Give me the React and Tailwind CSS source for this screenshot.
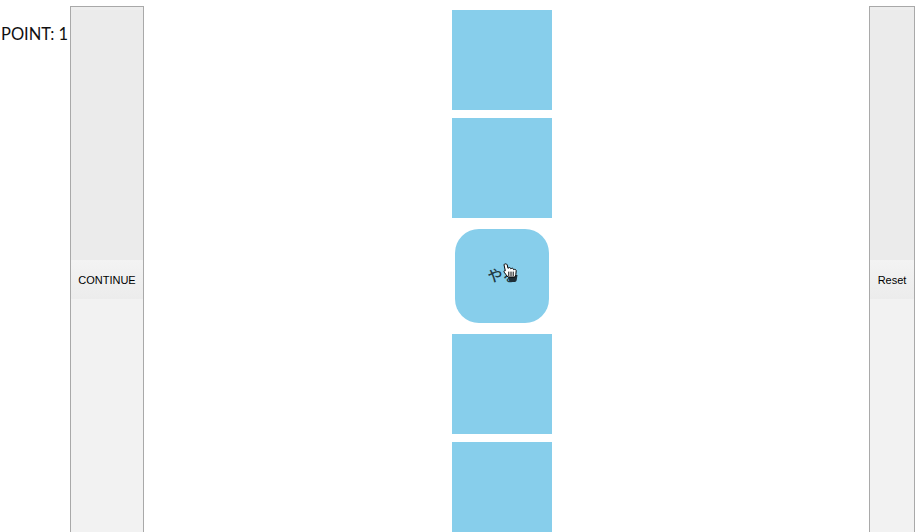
function SideButton({ label, className }) {
  return (
    <button className={`flex h-[532px] shrink-0 flex-col border border-[#a9a9a9] bg-[#f2f2f2] text-[11px] text-black ${className}`}>
      <div className="h-[3px] w-full bg-[#eeeeee]" />
      <div className="h-[250px] w-full bg-[#ebebeb]" />
      <div className="flex h-[39px] w-full items-center justify-center bg-gradient-to-b from-[#f3f3f3] to-[#ececec] pt-[2px]">
        {label}
      </div>
    </button>
  );
}

function HandCursor() {
  return (
    <svg className="absolute left-[48px] top-[34px]" width="16" height="20" viewBox="0 0 16 20">
      {/* dark part sitting under the hand */}
      <path d="M5 12h9.5l-.8 5c-.3 1.4-1.2 2-2.6 2H8.4c-1.4 0-2.2-.7-2.6-2z" fill="#1f2f38" />
      <path
        d="M1 1.8c0-1.2 3-1.2 3.2 0l.8 3.6.7-.6c.6-.5 1.7-.3 1.9.5l.2.6.8-.5c.7-.4 1.7 0 1.8.8l.1.5.9-.3c.9-.2 1.8.4 1.8 1.3l-.4 4c-.1.9-.4 1.6-1 2.3H5C3.7 12.6 2.4 11 1.2 9.2.6 8.2 1.5 7.2 2.3 7.7z"
        fill="#fff"
        stroke="#000"
        strokeWidth="1"
        strokeLinejoin="round"
      />
      <path d="M5.8 8.6v4.4M8 8.6v4.4M10.2 8.6v4.4" stroke="#000" strokeWidth="1" />
    </svg>
  );
}

export default function App() {
  return (
    <div className="flex h-[532px] w-[921px] items-start overflow-hidden bg-white pr-[6px] pt-[6px] font-['Liberation_Sans',sans-serif]">
      <p className="w-[70px] shrink-0 pl-[1px] pt-[16px] font-['Lato',sans-serif] text-[16.5px] leading-[24px] whitespace-nowrap text-[#111]">
        POINT: 1
      </p>
      <SideButton label="CONTINUE" className="w-[74px]" />
      <main className="flex flex-1 flex-col items-center gap-2 pr-[9px] pt-[4px]">
        <div className="h-[100px] w-[100px] bg-[#87ceeb]" />
        <div className="h-[100px] w-[100px] bg-[#87ceeb]" />
        <div className="relative m-[3px] flex h-[94px] w-[94px] items-center justify-center rounded-[24px] bg-[#87ceeb] font-['Noto_Sans_CJK_JP',sans-serif] text-[15px] font-medium text-[#1f3a44]">
          <span className="ml-[1px] mt-[-1px]">やる</span>
          <HandCursor />
        </div>
        <div className="h-[100px] w-[100px] bg-[#87ceeb]" />
        <div className="h-[100px] w-[100px] bg-[#87ceeb]" />
      </main>
      <SideButton label="Reset" className="w-[46px]" />
    </div>
  );
}
